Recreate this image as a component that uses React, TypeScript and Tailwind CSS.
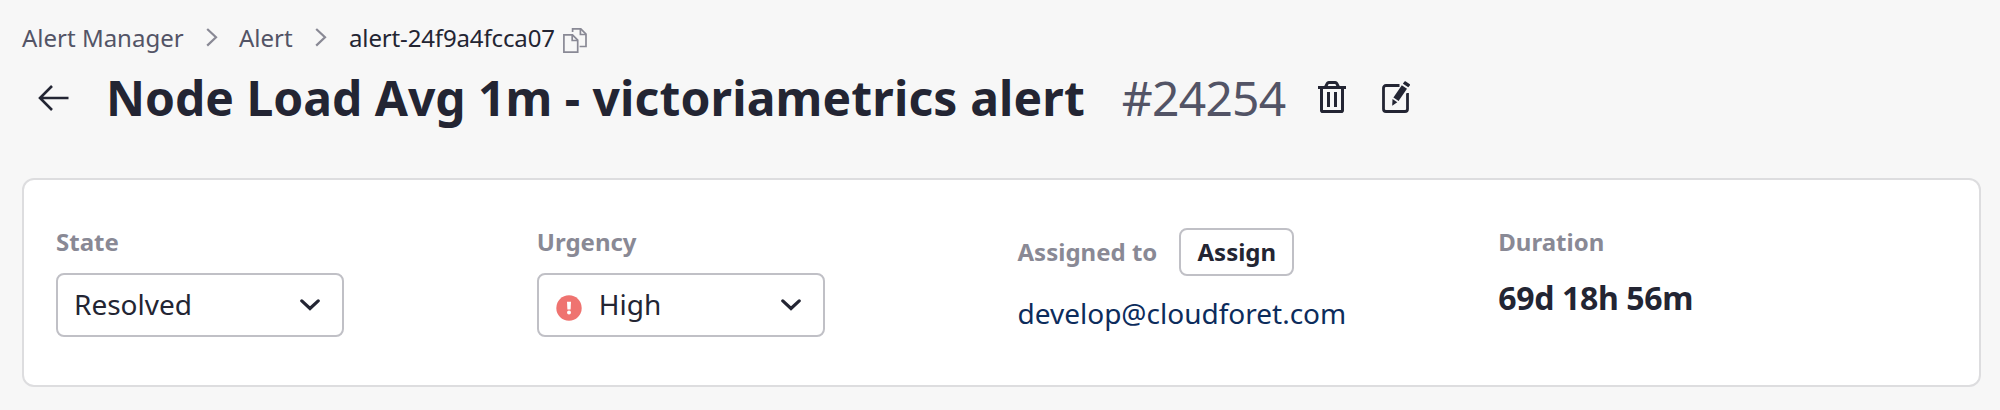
import type { ReactNode } from "react";

function Separator() {
  return (
    <svg className="h-6 w-6 shrink-0" viewBox="0 0 24 24" fill="none" stroke="#898995" strokeWidth="2.2">
      <path d="M7.2 3 16 11.300 7.200 19.600" />
    </svg>
  );
}

function CopyIcon() {
  return (
    <svg className="h-7 w-7 shrink-0" viewBox="0 0 28 28" fill="none" stroke="#898995" strokeWidth="1.7">
      <path d="M11.6 6V2.9h8.2l5.2 5.2v12.4h-6.4" />
      <path d="M19.4 3v5.5H25" />
      <path d="M2.9 8.8h8.6l5.2 5.4v11.9H2.9z" />
      <path d="M11.2 9v5.5h5.5" />
    </svg>
  );
}

function BackIcon() {
  return (
    <svg className="h-8 w-8 shrink-0" viewBox="0 0 32 32" fill="none" stroke="#232533" strokeWidth="2.6">
      <path d="M15 4 3 16l12 12M2.600 16H31.500" />
    </svg>
  );
}

function TrashIcon() {
  return (
    <svg className="h-8 w-7 shrink-0" viewBox="0 0 28 32" fill="none" stroke="#232533" strokeWidth="3">
      <path d="M0 6.5h28" />
      <path d="M7.5 6 9.3 2.4c.3-.6.7-.9 1.4-.9h6.6c.7 0 1.1.3 1.4.9L20.500 6" />
      <path d="M3.500 7v22.200c0 .8.5 1.300 1.300 1.300h18.400c.8 0 1.300-.5 1.300-1.300V7" />
      <path d="M10.500 11v15M17.500 11v15" />
    </svg>
  );
}

function EditIcon() {
  return (
    <svg className="h-8 w-7 shrink-0" viewBox="0 0 28 32" fill="none">
      <path
        d="M17.500 4.500H4A2.500 2.500 0 0 0 1.500 7v21A2.500 2.500 0 0 0 4 30.500h19a2.500 2.500 0 0 0 2.500-2.500V12"
        stroke="#232533"
        strokeWidth="2.800"
      />
      <path d="M23 0 11 16.500 9 26l9.500-5L30 4z" fill="#f7f7f7" />
      <path d="M19.800 4.200 25 7.700 16.600 20l-5.200-3.500z" fill="#232533" />
      <path d="m20.900 2.700 1.300-1.900c.4-.6 1-.7 1.600-.3l3.700 2.400c.6.4.7 1 .3 1.600L26.300 6.300z" fill="#232533" />
      <path d="m10.500 18 4.800 3.300-5.100 3.500z" fill="#232533" />
    </svg>
  );
}

function AlertIcon() {
  return (
    <svg className="mt-[7px] ml-px h-[26px] w-[26px] shrink-0" viewBox="0 0 26 26">
      <circle cx="13" cy="13" r="12.700" fill="#ef7370" />
      <path d="M11 6.800h4l-.4 7.700h-3.200z" fill="#fff" />
      <circle cx="13" cy="17.600" r="2" fill="#fff" />
    </svg>
  );
}

function Select({ children }: { children: ReactNode }) {
  return (
    <button className="mt-[13px] flex h-16 w-72 items-center justify-between rounded-lg border-2 border-[#c0c0c6] bg-white pr-[22px] pl-4 text-[28px] leading-9">
      <span className="flex items-center pb-0.5">{children}</span>
      <svg className="h-3 w-5" viewBox="0 0 20 12" fill="none" stroke="#232533" strokeWidth="3.200" strokeLinejoin="miter">
        <path d="M1.800 1.900 10 9.500l8.200-7.600" strokeLinecap="round" />
      </svg>
    </button>
  );
}

function Label({ children }: { children: ReactNode }) {
  return <div className="text-[24px] leading-9 font-bold text-[#898995]">{children}</div>;
}

export default function App() {
  return (
    <div className="h-[410px] w-[2000px] overflow-hidden bg-[#f7f7f7] pt-5 pl-[22px] font-['Noto_Sans',sans-serif] text-[#232533]">
      <nav className="flex h-9 items-center text-[24px] leading-9 whitespace-nowrap text-[#535466]">
        <span className="w-[178px]">Alert Manager</span>
        <Separator />
        <span className="ml-[15px] w-[70px]">Alert</span>
        <Separator />
        <span className="ml-4 tracking-[-0.14px] text-[#232533]">alert-24f9a4fcca07</span>
        <span className="ml-[6px] pt-1">
          <CopyIcon />
        </span>
      </nav>

      <header className="mt-[6px] flex h-[72px] items-center pl-[15px] leading-[72px] whitespace-nowrap">
        <BackIcon />
        <h1 className="ml-[37px] text-[48px] font-bold tracking-[-0.02px]">
          Node Load Avg 1m - <span className="tracking-[0.14px]">victoriametrics alert</span>
        </h1>
        <span className="ml-[37px] text-[48px] tracking-[-0.8px] text-[#535466]">#24254</span>
        <span className="ml-[33px] pb-0.5">
          <TrashIcon />
        </span>
        <span className="ml-9 pb-0.5">
          <EditIcon />
        </span>
      </header>

      <section className="mt-[44px] grid h-[209px] w-[1959px] grid-cols-4 gap-8 rounded-xl border-2 border-[#dddddf] bg-white px-8 pt-[44px]">
        <div>
          <Label>State</Label>
          <Select>Resolved</Select>
        </div>
        <div>
          <Label>Urgency</Label>
          <Select>
            <AlertIcon />
            <span className="ml-[17px]">High</span>
          </Select>
        </div>
        <div className="pt-1">
          <div className="flex items-center">
            <Label>Assigned to</Label>
            <button className="ml-[22px] h-12 w-[115px] rounded-lg border-2 border-[#c0c0c6] text-[24px] leading-9 font-bold">
              Assign
            </button>
          </div>
          <div className="mt-[19px] text-[28px] leading-9 text-[#0c2c5c]">develop@cloudforet.com</div>
        </div>
        <div>
          <Label>Duration</Label>
          <div className="mt-[14px] text-[32px] leading-[48px] font-bold tracking-[-0.35px]">69d 18h 56m</div>
        </div>
      </section>
    </div>
  );
}
